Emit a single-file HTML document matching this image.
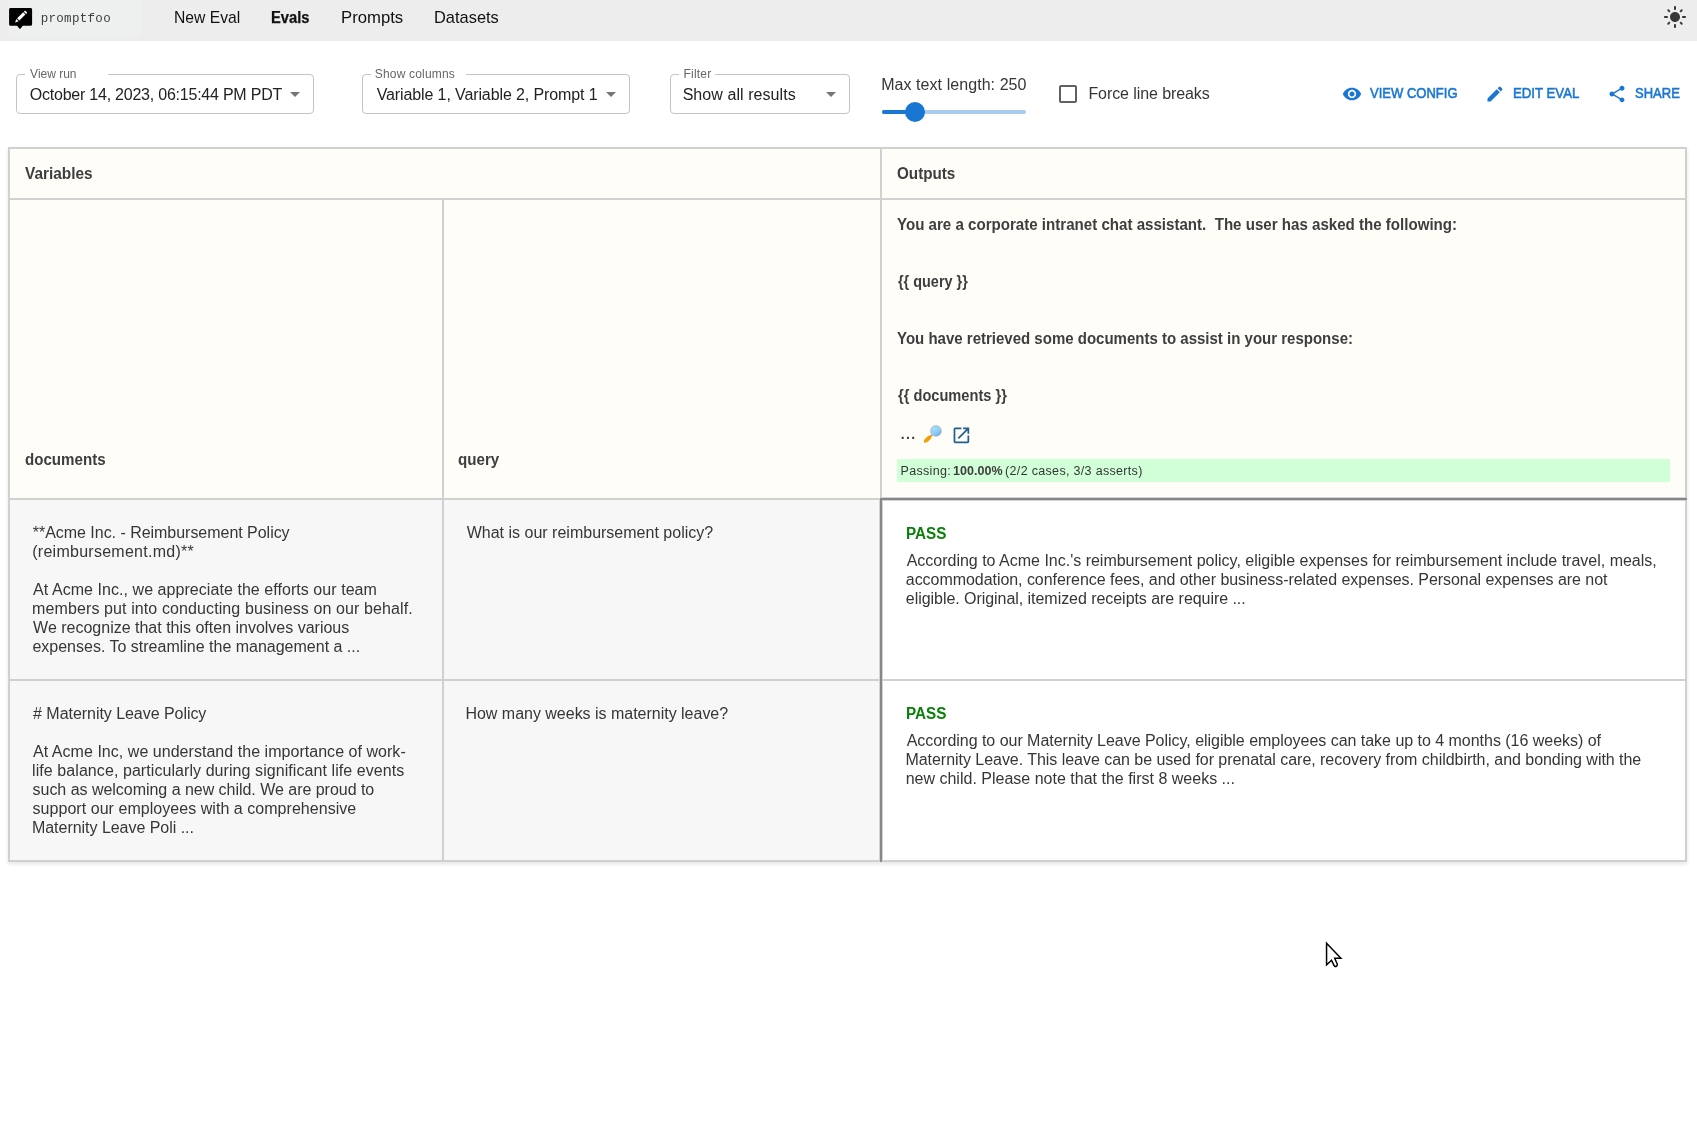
<!DOCTYPE html>
<html lang="en">
<head>
<meta charset="utf-8">
<title>promptfoo</title>
<style>
html,body{margin:0;padding:0;background:#fff;}
body{width:1697px;height:1122px;position:relative;overflow:hidden;font-family:"Liberation Sans",sans-serif;}
.a{position:absolute;box-sizing:border-box;}
.t{position:absolute;white-space:pre;line-height:1;font-family:"Liberation Sans",sans-serif;}
.nav{left:0;top:0;width:1697px;height:41px;background:#ededed;}
.logobg{left:8px;top:0;width:133.5px;height:37px;background:#eef0ef;border-radius:0 0 6px 6px;}
.sel{border:1px solid #c4c4c4;border-radius:4px;top:74px;height:40px;}
.notch{background:#fff;top:73px;height:3px;}
.hd{background:#fefdf8;}
.vc{background:#f7f7f7;}
.ln{background:#d0d0d0;}
.dk{background:#878787;}
</style>
</head>
<body>
<!-- nav -->
<div class="a nav"></div>
<div class="a logobg"></div>
<svg class="a" style="left:8px;top:7px" width="26" height="24" viewBox="0 0 26 24">
  <path d="M2.6 1.1h20c.9 0 1.5.6 1.500 1.500v14.600c0 .9-.6 1.500-1.500 1.500h-7.800l-2.300 2.900c-.3.400-.9.400-1.200 0l-2.300-2.900H2.600c-.9 0-1.500-.6-1.500-1.500V2.600c0-.9.600-1.500 1.500-1.500z" fill="#000"/>
  <path d="M7 15.400l1.400-3.300 2.200 2.200zM9.100 11.300l6.100-6 2.200 2.200-6.100 6zM15.900 4.700l.7-.7c.3-.3.700-.3 1 0l1.200 1.200c.3.300.3.700 0 1l-.7.700z" fill="#fff"/>
</svg>
<svg class="a" style="left:1663px;top:5px" width="24" height="24" viewBox="0 0 24 24" fill="#383838">
  <path d="M12 7c-2.760 0-5 2.240-5 5s2.240 5 5 5 5-2.240 5-5-2.240-5-5-5zM2 13h2c.550 0 1-.450 1-1s-.450-1-1-1H2c-.550 0-1 .450-1 1s.450 1 1 1zm18 0h2c.550 0 1-.450 1-1s-.450-1-1-1h-2c-.550 0-1 .450-1 1s.450 1 1 1zM11 2v2c0 .550.450 1 1 1s1-.450 1-1V2c0-.550-.450-1-1-1s-1 .450-1 1zm0 18v2c0 .550.450 1 1 1s1-.450 1-1v-2c0-.550-.450-1-1-1s-1 .450-1 1zM5.990 4.580c-.390-.390-1.030-.390-1.410 0-.390.390-.390 1.030 0 1.410l1.060 1.060c.390.390 1.030.390 1.410 0s.390-1.030 0-1.410L5.990 4.580zm12.370 12.370c-.390-.390-1.030-.390-1.410 0-.390.390-.390 1.030 0 1.410l1.060 1.060c.390.390 1.030.390 1.410 0 .390-.390.390-1.030 0-1.410l-1.060-1.060zm1.060-10.960c.390-.390.390-1.030 0-1.410-.390-.390-1.030-.390-1.410 0l-1.060 1.060c-.390.390-.390 1.030 0 1.410s1.030.390 1.410 0l1.060-1.060zM7.050 18.360c.390-.390.390-1.030 0-1.410-.390-.390-1.030-.390-1.410 0l-1.060 1.060c-.390.390-.390 1.030 0 1.410s1.030.390 1.410 0l1.060-1.060z"/>
</svg>

<!-- toolbar selects -->
<div class="a sel" style="left:16px;width:298px"></div>
<div class="a notch" style="left:25px;width:83px"></div>
<div class="a sel" style="left:362px;width:268px"></div>
<div class="a notch" style="left:371px;width:95px"></div>
<div class="a sel" style="left:670px;width:180px"></div>
<div class="a notch" style="left:679px;width:36px"></div>
<svg class="a" style="left:290px;top:92px" width="10" height="5"><path d="M0 0h10L5 5z" fill="#757575"/></svg>
<svg class="a" style="left:606px;top:92px" width="10" height="5"><path d="M0 0h10L5 5z" fill="#757575"/></svg>
<svg class="a" style="left:826px;top:92px" width="10" height="5"><path d="M0 0h10L5 5z" fill="#757575"/></svg>

<!-- slider -->
<div class="a" style="left:882px;top:110px;width:144px;height:4px;border-radius:2px;background:#a7caed"></div>
<div class="a" style="left:882px;top:110px;width:34px;height:4px;border-radius:2px;background:#1976d2"></div>
<div class="a" style="left:905px;top:102px;width:20px;height:20px;border-radius:50%;background:#1976d2"></div>
<!-- checkbox -->
<div class="a" style="left:1059px;top:85px;width:18px;height:18px;border:2px solid #616161;border-radius:2px"></div>

<!-- buttons icons -->
<svg class="a" style="left:1342px;top:83.750px" width="20" height="20" viewBox="0 0 24 24" fill="#1976d2"><path d="M12 4.500C7 4.500 2.730 7.610 1 12c1.730 4.390 6 7.500 11 7.500s9.270-3.110 11-7.500c-1.730-4.390-6-7.500-11-7.500zM12 17c-2.760 0-5-2.240-5-5s2.240-5 5-5 5 2.240 5 5-2.240 5-5 5zm0-8c-1.660 0-3 1.340-3 3s1.340 3 3 3 3-1.340 3-3-1.340-3-3-3z"/></svg>
<svg class="a" style="left:1485.100px;top:83.500px" width="20" height="20" viewBox="0 0 24 24" fill="#1976d2"><path d="M3 17.250V21h3.750L17.810 9.940l-3.750-3.750L3 17.250zM20.710 7.040c.390-.390.390-1.020 0-1.410l-2.340-2.340a.9959.9959 0 0 0-1.410 0l-1.830 1.830 3.750 3.750 1.830-1.830z"/></svg>
<svg class="a" style="left:1607.100px;top:84.200px" width="20" height="20" viewBox="0 0 24 24" fill="#1976d2"><path d="M18 16.080c-.760 0-1.440.300-1.960.770L8.910 12.700c.050-.230.090-.460.090-.700s-.040-.470-.090-.700l7.050-4.110c.540.500 1.250.810 2.040.810 1.660 0 3-1.340 3-3s-1.340-3-3-3-3 1.340-3 3c0 .240.040.470.090.700L8.040 9.810C7.500 9.310 6.790 9 6 9c-1.660 0-3 1.340-3 3s1.340 3 3 3c.790 0 1.500-.310 2.040-.810l7.120 4.160c-.050.210-.080.430-.080.650 0 1.610 1.310 2.920 2.920 2.920 1.610 0 2.920-1.310 2.920-2.920s-1.310-2.920-2.920-2.920z"/></svg>

<!-- table -->
<div class="a" style="left:8px;top:147px;width:1679px;height:715px;background:#d0d0d0;box-shadow:0 2px 4px rgba(0,0,0,.11)"></div>
<div class="a hd" style="left:10px;top:149px;width:870px;height:49px"></div>
<div class="a hd" style="left:882px;top:149px;width:803px;height:49px"></div>
<div class="a hd" style="left:10px;top:200px;width:432px;height:298px"></div>
<div class="a hd" style="left:444px;top:200px;width:436px;height:298px"></div>
<div class="a hd" style="left:882px;top:200px;width:803px;height:298px"></div>
<div class="a vc" style="left:10px;top:500px;width:432px;height:179px"></div>
<div class="a vc" style="left:444px;top:500px;width:436px;height:179px"></div>
<div class="a vc" style="left:10px;top:681px;width:432px;height:179px"></div>
<div class="a vc" style="left:444px;top:681px;width:436px;height:179px"></div>
<div class="a" style="left:882px;top:500px;width:803px;height:179px;background:#fff"></div>
<div class="a" style="left:882px;top:681px;width:803px;height:179px;background:#fff"></div>
<div class="a" style="left:879px;top:500px;width:4px;height:360px;background:#d4d4d4"></div>
<div class="a" style="left:882px;top:497px;width:803px;height:4px;background:#d4d4d4"></div>
<div class="a dk" style="left:880px;top:498px;width:2px;height:364px"></div>
<div class="a dk" style="left:880px;top:498px;width:807px;height:2px"></div>
<!-- green bar -->
<div class="a" style="left:897px;top:459px;width:773px;height:23px;background:#d1ffd7"></div>
<!-- magnifier emoji -->
<svg class="a" style="left:923px;top:424px" width="20" height="20" viewBox="0 0 20 20">
  <defs><linearGradient id="lg" x1="0.2" y1="0.1" x2="0.8" y2="0.95"><stop offset="0" stop-color="#9bdafb"/><stop offset="0.55" stop-color="#8fd0f8"/><stop offset="1" stop-color="#63aeee"/></linearGradient></defs>
  <ellipse cx="5.100" cy="15.600" rx="4.800" ry="1.600" transform="rotate(-43 5.100 15.600)" fill="#dfe3ee" opacity=".6"/>
  <path d="M9.500 10.400L8 11.900" stroke="#a7a7a7" stroke-width="1.600" stroke-linecap="round"/>
  <ellipse cx="4.700" cy="15.050" rx="4.800" ry="1.950" transform="rotate(-43 4.700 15.050)" fill="#f2a100"/>
  <circle cx="13" cy="6.900" r="5.350" fill="url(#lg)" stroke="#b4b6b8" stroke-width=".8"/>
  <path d="M16.300 10.900a5.350 5.350 0 0 0 2-3" stroke="#8fcf8a" stroke-width=".7" fill="none" opacity=".7"/>
  <circle cx="11.200" cy="5" r="1" fill="#c9ecfd" opacity=".7"/>
</svg>
<!-- open in new -->
<svg class="a" style="left:950.800px;top:425.100px" width="20.800" height="20.800" viewBox="0 0 24 24" fill="#215f8d"><path d="M19 19H5V5h7V3H5c-1.110 0-2 .900-2 2v14c0 1.100.890 2 2 2h14c1.100 0 2-.900 2-2v-7h-2v7zM14 3v2h3.590l-9.830 9.830 1.410 1.410L19 6.410V10h2V3h-7z"/></svg>

<!-- cursor -->
<svg class="a" style="left:1325px;top:941px;overflow:visible;filter:drop-shadow(0.6px 0.9px 0.7px rgba(0,0,0,.28))" width="20" height="30" viewBox="0 0 20 30">
  <g transform="translate(0.13,0.46) scale(0.965)">
  <path d="M1.500 1.800V24.300L6.600 19.400l2.600 5.400c.5 1 1.500 1.300 2.400.9.900-.400 1.300-1.400.9-2.300l-2.600-6h6.400z" fill="#fff" stroke="#000" stroke-width="1.500" stroke-linejoin="miter"/>
  </g>
</svg>

<div class="a" style="left:0;top:0;width:1697px;height:1122px;will-change:transform">
<span class="t" style="left:40.64px;top:13px;font-size:12.5px;color:#3f3f3f;letter-spacing:0.319px;font-family:'Liberation Mono', monospace;">promptfoo</span>
<span class="t" style="left:173.87px;top:9px;font-size:17px;color:#111;transform-origin:0 0;transform:scaleX(0.9225);">New Eval</span>
<span class="t" style="left:271.34px;top:9px;font-size:17px;color:#111;transform-origin:0 0;transform:scaleX(0.8661);font-weight:700;-webkit-text-stroke:0.25px #111;">Evals</span>
<span class="t" style="left:340.58px;top:9px;font-size:17px;color:#111;transform-origin:0 0;transform:scaleX(0.9825);">Prompts</span>
<span class="t" style="left:433.62px;top:9px;font-size:17px;color:#111;transform-origin:0 0;transform:scaleX(0.9656);">Datasets</span>
<span class="t" style="left:30.11px;top:68px;font-size:12px;color:#666;letter-spacing:-0.007px;">View run</span>
<span class="t" style="left:374.72px;top:68px;font-size:12px;color:#666;letter-spacing:0.189px;">Show columns</span>
<span class="t" style="left:683.46px;top:68px;font-size:12px;color:#666;letter-spacing:0.231px;">Filter</span>
<span class="t" style="left:29.78px;top:87px;font-size:16px;color:#222;letter-spacing:-0.226px;">October 14, 2023, 06:15:44 PM PDT</span>
<span class="t" style="left:376.67px;top:87px;font-size:16px;color:#222;letter-spacing:-0.113px;">Variable 1, Variable 2, Prompt 1</span>
<span class="t" style="left:682.63px;top:87px;font-size:16px;color:#222;letter-spacing:0.070px;">Show all results</span>
<span class="t" style="left:881.16px;top:77px;font-size:16px;color:#363636;letter-spacing:0.064px;">Max text length: 250</span>
<span class="t" style="left:1088.44px;top:86px;font-size:16px;color:#363636;letter-spacing:-0.090px;">Force line breaks</span>
<span class="t" style="left:1369.60px;top:86px;font-size:14.2px;color:#1976d2;transform-origin:0 0;transform:scaleX(0.9175);-webkit-text-stroke:0.55px #1976d2;">VIEW CONFIG</span>
<span class="t" style="left:1512.71px;top:86px;font-size:14.2px;color:#1976d2;transform-origin:0 0;transform:scaleX(0.9306);-webkit-text-stroke:0.55px #1976d2;">EDIT EVAL</span>
<span class="t" style="left:1634.79px;top:86px;font-size:14.2px;color:#1976d2;transform-origin:0 0;transform:scaleX(0.9178);-webkit-text-stroke:0.55px #1976d2;">SHARE</span>
<span class="t" style="left:25.28px;top:166px;font-size:16px;color:#3e3e3e;transform-origin:0 0;transform:scaleX(0.9627);font-weight:700;">Variables</span>
<span class="t" style="left:896.90px;top:166px;font-size:16px;color:#3e3e3e;transform-origin:0 0;transform:scaleX(0.9509);font-weight:700;">Outputs</span>
<span class="t" style="left:25.21px;top:452px;font-size:16px;color:#3e3e3e;transform-origin:0 0;transform:scaleX(0.9447);font-weight:700;">documents</span>
<span class="t" style="left:458.19px;top:452px;font-size:16px;color:#3e3e3e;transform-origin:0 0;transform:scaleX(0.9459);font-weight:700;">query</span>
<span class="t" style="left:897.14px;top:217px;font-size:16px;color:#3e3e3e;transform-origin:0 0;transform:scaleX(0.9435);font-weight:700;">You are a corporate intranet chat assistant.  The user has asked the following:</span>
<span class="t" style="left:897.79px;top:274px;font-size:16px;color:#3e3e3e;transform-origin:0 0;transform:scaleX(0.9018);font-weight:700;">{{ query }}</span>
<span class="t" style="left:897.15px;top:331px;font-size:16px;color:#3e3e3e;transform-origin:0 0;transform:scaleX(0.9381);font-weight:700;">You have retrieved some documents to assist in your response:</span>
<span class="t" style="left:897.78px;top:388px;font-size:16px;color:#3e3e3e;transform-origin:0 0;transform:scaleX(0.9139);font-weight:700;">{{ documents }}</span>
<span class="t" style="left:900.72px;top:427px;font-size:14px;color:#3e3e3e;letter-spacing:1.363px;font-weight:700;">...</span>
<span class="t" style="left:900.47px;top:465px;font-size:12.5px;color:#363636;letter-spacing:0.334px;">Passing:</span>
<span class="t" style="left:953.05px;top:465px;font-size:12.5px;color:#3e3e3e;letter-spacing:0.034px;font-weight:700;">100.00%</span>
<span class="t" style="left:1005.10px;top:465px;font-size:12.5px;color:#363636;letter-spacing:0.319px;">(2/2 cases, 3/3 asserts)</span>
<span class="t" style="left:32.79px;top:525px;font-size:16px;color:#363636;letter-spacing:-0.031px;">**Acme Inc. - Reimbursement Policy</span>
<span class="t" style="left:32.27px;top:544px;font-size:16px;color:#363636;letter-spacing:0.262px;">(reimbursement.md)**</span>
<span class="t" style="left:33.07px;top:582px;font-size:16px;color:#363636;letter-spacing:0.056px;">At Acme Inc., we appreciate the efforts our team</span>
<span class="t" style="left:32.07px;top:601px;font-size:16px;color:#363636;letter-spacing:0.106px;">members put into conducting business on our behalf.</span>
<span class="t" style="left:33.09px;top:620px;font-size:16px;color:#363636;letter-spacing:-0.003px;">We recognize that this often involves various</span>
<span class="t" style="left:32.43px;top:639px;font-size:16px;color:#363636;letter-spacing:-0.003px;">expenses. To streamline the management a ...</span>
<span class="t" style="left:33.11px;top:706px;font-size:16px;color:#363636;letter-spacing:-0.046px;"># Maternity Leave Policy</span>
<span class="t" style="left:33.07px;top:744px;font-size:16px;color:#363636;letter-spacing:0.037px;">At Acme Inc, we understand the importance of work-</span>
<span class="t" style="left:32.09px;top:763px;font-size:16px;color:#363636;letter-spacing:0.071px;">life balance, particularly during significant life events</span>
<span class="t" style="left:32.56px;top:782px;font-size:16px;color:#363636;letter-spacing:-0.029px;">such as welcoming a new child. We are proud to</span>
<span class="t" style="left:32.56px;top:801px;font-size:16px;color:#363636;letter-spacing:0.043px;">support our employees with a comprehensive</span>
<span class="t" style="left:31.96px;top:820px;font-size:16px;color:#363636;letter-spacing:-0.032px;">Maternity Leave Poli ...</span>
<span class="t" style="left:466.65px;top:525px;font-size:16px;color:#363636;letter-spacing:0.007px;">What is our reimbursement policy?</span>
<span class="t" style="left:465.44px;top:706px;font-size:16px;color:#363636;letter-spacing:-0.015px;">How many weeks is maternity leave?</span>
<span class="t" style="left:905.97px;top:526px;font-size:16px;color:#0a800a;transform-origin:0 0;transform:scaleX(0.9518);font-weight:700;">PASS</span>
<span class="t" style="left:906.63px;top:553px;font-size:16px;color:#363636;letter-spacing:-0.005px;">According to Acme Inc.'s reimbursement policy, eligible expenses for reimbursement include travel, meals,</span>
<span class="t" style="left:905.82px;top:572px;font-size:16px;color:#363636;letter-spacing:-0.049px;">accommodation, conference fees, and other business-related expenses. Personal expenses are not</span>
<span class="t" style="left:905.83px;top:591px;font-size:16px;color:#363636;letter-spacing:-0.048px;">eligible. Original, itemized receipts are require ...</span>
<span class="t" style="left:905.97px;top:706px;font-size:16px;color:#0a800a;transform-origin:0 0;transform:scaleX(0.9518);font-weight:700;">PASS</span>
<span class="t" style="left:906.63px;top:733px;font-size:16px;color:#363636;letter-spacing:-0.027px;">According to our Maternity Leave Policy, eligible employees can take up to 4 months (16 weeks) of</span>
<span class="t" style="left:905.44px;top:752px;font-size:16px;color:#363636;letter-spacing:-0.037px;">Maternity Leave. This leave can be used for prenatal care, recovery from childbirth, and bonding with the</span>
<span class="t" style="left:905.65px;top:771px;font-size:16px;color:#363636;letter-spacing:0.005px;">new child. Please note that the first 8 weeks ...</span>
</div>
</body>
</html>
